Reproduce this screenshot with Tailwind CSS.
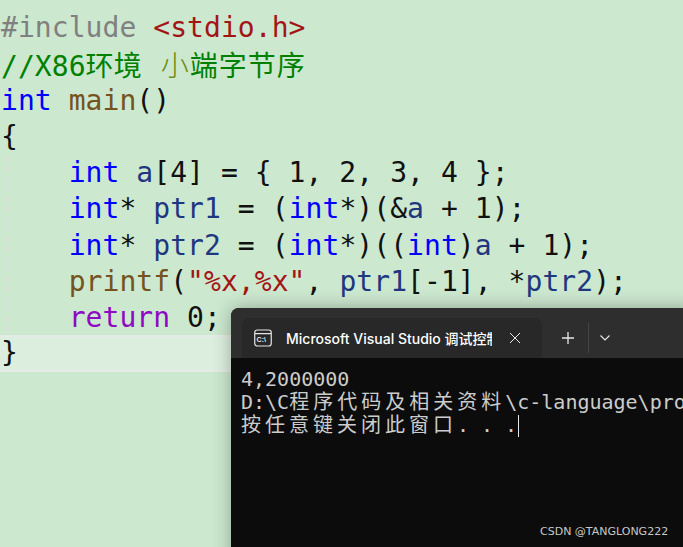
<!doctype html>
<html><head><meta charset="utf-8"><script src="https://cdn.jsdelivr.net/npm/@tailwindcss/browser@4"></script></head>
<body class="m-0">
<div class="relative w-[683px] h-[547px] overflow-hidden bg-[#cce8cf] font-['DejaVu_Sans_Mono','Noto_Sans_CJK_SC',monospace] text-[28px] leading-[36.25px] tracking-[0.06px] text-[#111] pt-[10px] pl-[1px]">
  <div class="whitespace-pre h-[36.25px]"><span class="text-[#808080]">#include</span> <span class="text-[#a31515]">&lt;stdio.h&gt;</span></div>
  <div class="whitespace-pre h-[36.25px] text-[#008000]">//X86<span class="font-['Noto_Sans_CJK_SC'] font-normal">环境</span> <span class="font-['Noto_Sans_CJK_SC'] font-normal tracking-[1px] ml-[2px]"><span class="text-[#6b8a10] font-light">小</span>端字节序</span></div>
  <div class="whitespace-pre h-[36.25px]"><span class="text-[#0000ff]">int</span> <span class="text-[#74531f]">main</span>()</div>
  <div class="whitespace-pre h-[36.25px]">{</div>
  <div class="relative">
    <div class="absolute left-[6px] top-[1px] h-[176px] border-l-2 border-dashed border-[#dcdcdc]"></div>
    <div class="whitespace-pre h-[36.25px]">    <span class="text-[#0000ff]">int</span> <span class="text-[#1f377f]">a</span>[4] = { 1, 2, 3, 4 };</div>
    <div class="whitespace-pre h-[36.25px]">    <span class="text-[#0000ff]">int</span>* <span class="text-[#1f377f]">ptr1</span> = (<span class="text-[#0000ff]">int</span>*)(&amp;<span class="text-[#1f377f]">a</span> + 1);</div>
    <div class="whitespace-pre h-[36.25px]">    <span class="text-[#0000ff]">int</span>* <span class="text-[#1f377f]">ptr2</span> = (<span class="text-[#0000ff]">int</span>*)((<span class="text-[#0000ff]">int</span>)<span class="text-[#1f377f]">a</span> + 1);</div>
    <div class="whitespace-pre h-[36.25px]">    <span class="text-[#74531f]">printf</span>(<span class="text-[#a31515]">"%x,%x"</span>, <span class="text-[#1f377f]">ptr1</span>[-1], *<span class="text-[#1f377f]">ptr2</span>);</div>
    <div class="whitespace-pre h-[36.25px]">    <span class="text-[#8f08c4]">return</span> 0;</div>
  </div>
  <div class="whitespace-pre h-[37px] -ml-[1px] pl-[1px] -mt-[1px] bg-[#dcefde] border-y-[3px] border-[#e3ece4] leading-[30px]">}</div>

  <div class="absolute left-[231px] top-[308px] w-[470px] h-[260px] rounded-t-[8px] bg-[#0c0c0c] shadow-[0_0_18px_rgba(0,0,0,0.3)] overflow-hidden tracking-normal">
    <div class="flex items-end h-[50px] bg-[#2e2e2e] pl-[11px] font-['Inter','Noto_Sans_CJK_SC',sans-serif] text-white">
      <div class="flex items-center h-[40px] w-[300px] rounded-t-[8px] bg-[#282828] pl-[12px] text-[14px] leading-[22px] font-medium">
        <svg class="w-[18px] h-[18px] shrink-0" viewBox="0 0 18 18" fill="none"><rect x="0.75" y="1" width="16.5" height="16" rx="2.5" stroke="#e6e6e6" stroke-width="1.2"/><path d="M1 4.6h16" stroke="#e6e6e6" stroke-width="1.2"/><text x="2.6" y="13.400" font-family="Liberation Sans" font-size="7" font-weight="700" fill="#e6e6e6">C:\</text></svg>
        <div class="ml-[14px] w-[206px] h-[22px] pt-[1px] overflow-hidden whitespace-nowrap">Microsoft Visual Studio 调试控制台</div>
        <svg class="ml-[17px] w-[12px] h-[12px]" viewBox="0 0 12 12" fill="none" stroke="#e8e8e8" stroke-width="1"><path d="M1 1l10 10M11 1L1 11"/></svg>
      </div>
      <div class="flex items-center h-[40px]">
        <svg class="ml-[20px] w-[12px] h-[12px]" viewBox="0 0 12 12" fill="none" stroke="#e8e8e8" stroke-width="1.3"><path d="M6 0v12M0 6h12"/></svg>
        <div class="ml-[14px] w-px h-[30px] bg-[#454545]"></div>
        <svg class="ml-[11px] w-[10px] h-[6px]" viewBox="0 0 10 6" fill="none" stroke="#e8e8e8" stroke-width="1.1"><path d="M0.5 0.5L5 5l4.500-4.500"/></svg>
      </div>
    </div>
    <div class="pl-[10px] pt-[10px] text-[20px] leading-[23px] text-[#cccccc] font-['DejaVu_Sans_Mono','Noto_Sans_CJK_SC',monospace]">
      <div class="whitespace-pre">4,2000000</div>
      <div class="whitespace-pre">D:\C<span class="tracking-[4px]">程序代码及相关资料</span>\c-language\project</div>
      <div class="flex whitespace-pre"><span class="tracking-[4px]">按任意键关闭此窗口</span><span class="tracking-[12px]">...</span><span class="ml-[-11px] mt-[1px] w-px h-[22px] bg-[#e8e8e8]"></span></div>
    </div>
    <div class="absolute left-[309px] top-[216px] text-[11px] leading-[16px] text-[#c8c8c8] font-['DejaVu_Sans'] whitespace-nowrap">CSDN @TANGLONG222</div>
  </div>
</div>
</body></html>
